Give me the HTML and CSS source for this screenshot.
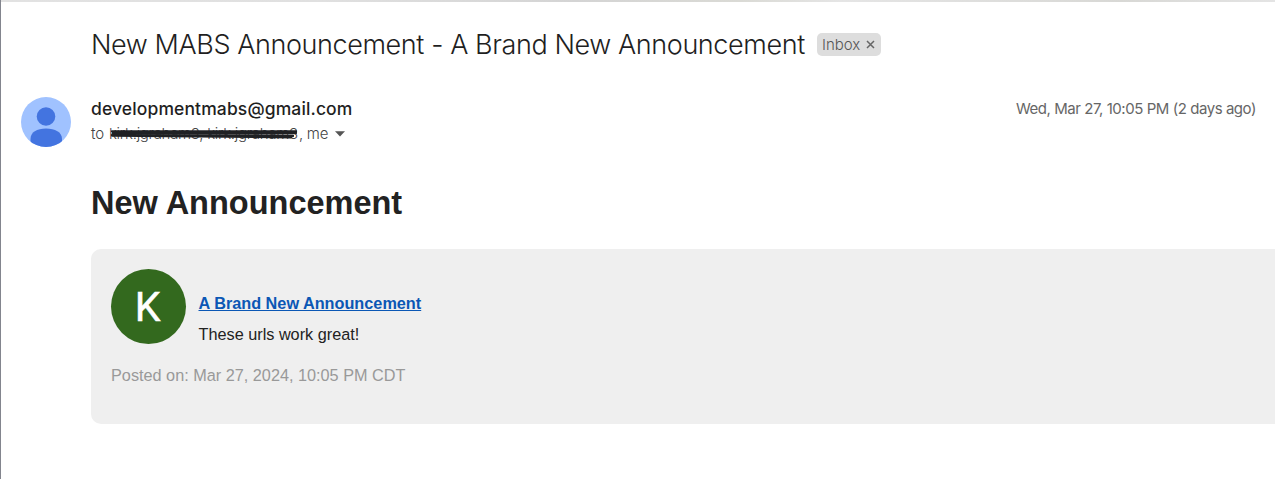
FILE: index.html
```html
<!DOCTYPE html>
<html lang="en">
<head>
<meta charset="utf-8">
<title>New MABS Announcement</title>
<link rel="stylesheet" href="styles.css">
</head>
<body>
<div class="page">
  <header class="subject">
    <h1 class="subject-title">New MABS Announcement - A Brand New Announcement</h1>
    <span class="label"><span class="label-name">Inbox</span>
      <svg class="label-close" width="9" height="9" viewBox="0 0 9 9"><path d="M1 1L8 8M8 1L1 8"/></svg>
    </span>
  </header>
  <section class="sender">
    <svg class="sender-avatar" width="50" height="50" viewBox="0 0 50 50">
      <defs><clipPath id="disc"><circle cx="25" cy="25" r="25"/></clipPath></defs>
      <g clip-path="url(#disc)">
        <rect width="50" height="50" fill="#a0c2ff"/>
        <circle cx="25" cy="19.5" r="9.3" fill="#4374e0"/>
        <path d="M9.5 50V42C9.5 35 16 31.5 25 31.5S41 35 41 42V50Z" fill="#4374e0"/>
      </g>
    </svg>
    <div class="sender-info">
      <div class="sender-row">
        <span class="email">developmentmabs@gmail.com</span>
        <time class="date">Wed, Mar 27, 10:05 PM (2 days ago)</time>
      </div>
      <div class="recipients">
        <span class="to">to</span>
        <span class="struck"><span class="names">kirk.jgraham3, kirk.jgraham3</span>
          <svg class="scribble" width="190" height="12" viewBox="0 0 190 12"><path d="M3 3.3H187M4 5.3L187 5M3 7.5L182 9.3M5 6L184 8" /></svg>
        </span><span class="me">, me</span>
        <svg class="caret" width="10" height="6" viewBox="0 0 10 6"><path d="M0 .3H10L5 5.6Z"/></svg>
      </div>
    </div>
  </section>
  <main class="message">
    <h2 class="heading">New Announcement</h2>
    <article class="card">
      <div class="card-top">
        <div class="card-avatar">K</div>
        <div class="card-text">
          <a class="card-link">A Brand New Announcement</a>
          <p class="card-body">These urls work great!</p>
        </div>
      </div>
      <p class="posted">Posted on: Mar 27, 2024, 10:05 PM CDT</p>
    </article>
  </main>
</div>
</body>
</html>
```
FILE: styles.css
```css
* { box-sizing: border-box; }
body { margin: 0; background: #fff; color: #1f1f1f; overflow: hidden; }
.page {
  height: 479px;
  padding-left: 20px;
  border-left: 1px solid #83858e;
  background: linear-gradient(90deg, #e2e2e2, #e0e0e0 25%, #d4d4d4 45%, #dadad5 58%, #e5e5e5 66%, #d8d8d5 88%, #e4e4e4) 0 0 / 100% 2px no-repeat;
}
.subject { display: flex; align-items: center; padding: 27px 0 0 70px; height: 62px; }
.subject-title { margin: 0; width: 726px; font: 300 27px/35px Inter, sans-serif; letter-spacing: -0.41px; white-space: nowrap; }
.label { display: flex; align-items: center; gap: 6px; width: 64px; height: 23px; padding-left: 5px; border-radius: 5px; background: #ddd; }
.label-name { font: 300 15px/20px Inter, sans-serif; color: #555; }
.label-close { fill: none; stroke: #666; stroke-width: 1.5; }
.sender { display: flex; gap: 20px; padding: 35px 19px 0 0; }
.sender-avatar { flex: none; }
.sender-info { flex: 1; margin-top: -1px; }
.sender-row { display: flex; justify-content: space-between; height: 25px; line-height: 25px; }
.email { font: 500 17.5px/25px Inter, sans-serif; letter-spacing: 0.12px; }
.date { font: 400 15px/25px Inter, sans-serif; letter-spacing: -0.45px; color: #666; white-space: nowrap; }
.recipients { display: flex; align-items: center; height: 25px; font: 300 15px/25px Inter, sans-serif; color: #444; white-space: nowrap; }
.to { width: 18px; }
.struck { position: relative; width: 190px; }
.names { letter-spacing: -0.3px; }
.scribble { position: absolute; left: 0; top: 7px; fill: none; stroke: #202124; stroke-width: 2.3; stroke-linecap: round; }
.me { width: 36px; letter-spacing: -0.3px; }
.caret { fill: #555; }
.message { padding: 37px 0 0 70px; font-family: "Liberation Sans", Arial, sans-serif; font-size: 16.25px; color: #222; }
.heading { margin: 0; font-size: 32.5px; line-height: 38px; }
.card { margin-top: 27px; height: 175px; padding: 20px; border-radius: 10px 0 0 10px; background: #efefef; }
.card-top { display: flex; gap: 12.5px; }
.card-avatar { display: flex; align-items: center; justify-content: center; width: 75px; height: 75px; padding: 2px 2px 0 0; border-radius: 50%; background: #33691e; color: #fff; font: 400 41px/75px Roboto, sans-serif; -webkit-text-stroke: 0.5px #fff; }
.card-text { padding-top: 25px; }
.card-link { display: block; font-weight: bold; line-height: 19px; color: #0b57b5; text-decoration: underline; }
.card-body { margin: 12px 0 0; line-height: 19px; }
.posted { margin: 22px 0 0; line-height: 19px; color: #999; }
```
